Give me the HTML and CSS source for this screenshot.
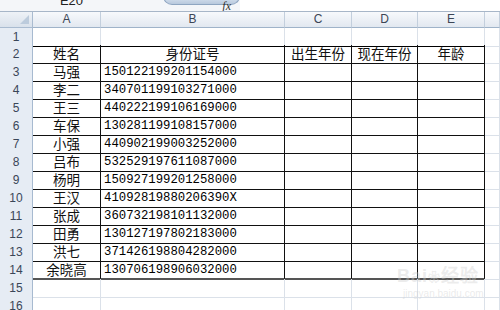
FILE: index.html
```html
<!DOCTYPE html>
<html lang="zh-CN">
<head>
    <meta charset="UTF-8">
    <title>身份证号 - 年龄</title>
    <link rel="stylesheet" href="styles.css">
</head>
<body>
    <!-- formula bar, cut off at the top -->
    <div class="topbar">
        <span class="namebox">E20</span>
        <span class="fx">fx</span>
        <span class="formula"></span>
    </div>

    <div class="sheet">
        <div class="row head">
            <div class="corner"><span class="tri"></span></div>
            <div class="ch">A</div><div class="ch">B</div><div class="ch">C</div><div class="ch">D</div><div class="ch">E</div><div class="ch"></div>
        </div>
        <div class="row r1">
            <div class="rh">1</div>
            <div class="c edge"></div><div class="c edge"></div><div class="c edge"></div><div class="c edge"></div><div class="c edge"></div><div class="c"></div>
        </div>
        <div class="row">
            <div class="rh">2</div>
            <div class="c b mid">姓名</div><div class="c b mid">身份证号</div><div class="c b mid">出生年份</div><div class="c b mid">现在年份</div><div class="c b mid">年龄</div><div class="c"></div>
        </div>
        <div class="row">
            <div class="rh">3</div>
            <div class="c b mid">马强</div><div class="c b id">150122199201154000</div><div class="c b"></div><div class="c b"></div><div class="c b"></div><div class="c"></div>
        </div>
        <div class="row">
            <div class="rh">4</div>
            <div class="c b mid">李二</div><div class="c b id">340701199103271000</div><div class="c b"></div><div class="c b"></div><div class="c b"></div><div class="c"></div>
        </div>
        <div class="row">
            <div class="rh">5</div>
            <div class="c b mid">王三</div><div class="c b id">440222199106169000</div><div class="c b"></div><div class="c b"></div><div class="c b"></div><div class="c"></div>
        </div>
        <div class="row">
            <div class="rh">6</div>
            <div class="c b mid">车保</div><div class="c b id">130281199108157000</div><div class="c b"></div><div class="c b"></div><div class="c b"></div><div class="c"></div>
        </div>
        <div class="row">
            <div class="rh">7</div>
            <div class="c b mid">小强</div><div class="c b id">440902199003252000</div><div class="c b"></div><div class="c b"></div><div class="c b"></div><div class="c"></div>
        </div>
        <div class="row">
            <div class="rh">8</div>
            <div class="c b mid">吕布</div><div class="c b id">532529197611087000</div><div class="c b"></div><div class="c b"></div><div class="c b"></div><div class="c"></div>
        </div>
        <div class="row">
            <div class="rh">9</div>
            <div class="c b mid">杨明</div><div class="c b id">150927199201258000</div><div class="c b"></div><div class="c b"></div><div class="c b"></div><div class="c"></div>
        </div>
        <div class="row">
            <div class="rh">10</div>
            <div class="c b mid">王汉</div><div class="c b id">41092819880206390X</div><div class="c b"></div><div class="c b"></div><div class="c b"></div><div class="c"></div>
        </div>
        <div class="row">
            <div class="rh">11</div>
            <div class="c b mid">张成</div><div class="c b id">360732198101132000</div><div class="c b"></div><div class="c b"></div><div class="c b"></div><div class="c"></div>
        </div>
        <div class="row">
            <div class="rh">12</div>
            <div class="c b mid">田勇</div><div class="c b id">130127197802183000</div><div class="c b"></div><div class="c b"></div><div class="c b"></div><div class="c"></div>
        </div>
        <div class="row">
            <div class="rh">13</div>
            <div class="c b mid">洪七</div><div class="c b id">371426198804282000</div><div class="c b"></div><div class="c b"></div><div class="c b"></div><div class="c"></div>
        </div>
        <div class="row">
            <div class="rh">14</div>
            <div class="c b last mid">余晓高</div><div class="c b last id">130706198906032000</div><div class="c b last"></div><div class="c b last"></div><div class="c b last"></div><div class="c"></div>
        </div>
        <div class="row">
            <div class="rh">15</div>
            <div class="c"></div><div class="c"></div><div class="c"></div><div class="c"></div><div class="c"></div><div class="c"></div>
        </div>
        <div class="row">
            <div class="rh">16</div>
            <div class="c"></div><div class="c"></div><div class="c"></div><div class="c"></div><div class="c"></div><div class="c"></div>
        </div>

        <div class="watermark">
            <span class="wm-logo">Bai<span class="paw">&#x2740;</span>经验</span>
            <span class="wm-url">jingyan.baidu.com</span>
        </div>
    </div>
</body>
</html>
```

FILE: styles.css
```css
html, body {
    margin: 0;
    padding: 0;
}
body {
    width: 500px;
    height: 310px;
    overflow: hidden;
    background: #fff;
    font-family: "Noto Sans CJK SC", "Noto Sans", sans-serif;
    color: #000;
}

.topbar {
    display: flex;
    height: 11px;
    border-bottom: 1px solid #a7b6c8;
    background: #f4f6f9;
    overflow: hidden;
}
.namebox {
    width: 163px;
    text-align: center;
    font-family: "Liberation Sans", Arial, sans-serif;
    font-size: 13px;
    line-height: 13px;
    margin-top: -6px;
    color: #222;
    padding-right: 20px;
    box-sizing: border-box;
}
.fx {
    width: 77px;
    height: 10px;
    box-sizing: border-box;
    border: 1px solid #8fa6c1;
    border-top: none;
    border-radius: 0 0 9px 9px;
    background: linear-gradient(#e3ebf5, #b8c9dd);
    font-family: "Liberation Serif", serif;
    font-style: italic;
    font-size: 12px;
    line-height: 12px;
    margin-top: -5px;
    padding-top: 5px;
    text-align: right;
    padding-right: 8px;
    color: #333;
}
.formula {
    flex: 1;
    background: #fff;
}

.sheet {
    position: relative;
}
.row {
    display: grid;
    grid-template-columns: 33px 68px 184px 67px 66px 67px 1fr;
    height: 18px;
}
.row.head {
    height: 16px;
}
.row.r1 {
    height: 17px;
}

.corner {
    position: relative;
    background: linear-gradient(#eef2f7, #d9e1eb);
    border-right: 1px solid #a9bbd0;
    border-bottom: 1px solid #a9bbd0;
}
.tri {
    position: absolute;
    right: 3px;
    bottom: 3px;
    width: 0;
    height: 0;
    border-left: 9px solid transparent;
    border-bottom: 9px solid #bccbdc;
}
.ch {
    background: linear-gradient(#f7f9fc, #e2e8f0);
    border-right: 1px solid #c3cfdd;
    border-bottom: 1px solid #9fb3c9;
    font-family: "Liberation Sans", Arial, sans-serif;
    font-size: 12px;
    line-height: 15px;
    text-align: center;
    color: #3c4656;
}
.rh {
    background: #e6ecf4;
    border-right: 1px solid #a7bad0;
    border-bottom: 1px solid #c8d3e0;
    font-family: "Liberation Sans", Arial, sans-serif;
    font-size: 12px;
    line-height: 18px;
    text-align: center;
    color: #3a4658;
}

.c {
    display: flex;
    align-items: center;
    border-right: 1px solid #dbe1e9;
    border-bottom: 1px solid #dbe1e9;
    font-size: 13.5px;
    line-height: 1;
    white-space: nowrap;
    overflow: hidden;
    color: #111;
}
.c.edge {
    border-bottom-color: #000;
}
.c.b {
    border-right-color: #111;
    border-bottom-color: #111;
}
.c.last {
    border-bottom: 2px solid #555;
}
.mid {
    justify-content: center;
}
.id {
    font-family: "Liberation Mono", "Courier New", monospace;
    font-size: 12.3px;
    padding: 1px 0 0 3px;
    color: #000;
}

.watermark {
    position: absolute;
    left: 397px;
    top: 254px;
    display: flex;
    flex-direction: column;
    color: rgba(205, 205, 205, 0.4);
    font-family: "Liberation Sans", Arial, sans-serif;
    pointer-events: none;
}
.wm-logo {
    font-size: 18px;
    font-weight: bold;
    line-height: 20px;
    letter-spacing: 1px;
}
.paw {
    font-size: 12px;
}
.wm-url {
    font-size: 10px;
    line-height: 12px;
    padding-left: 6px;
}
```
